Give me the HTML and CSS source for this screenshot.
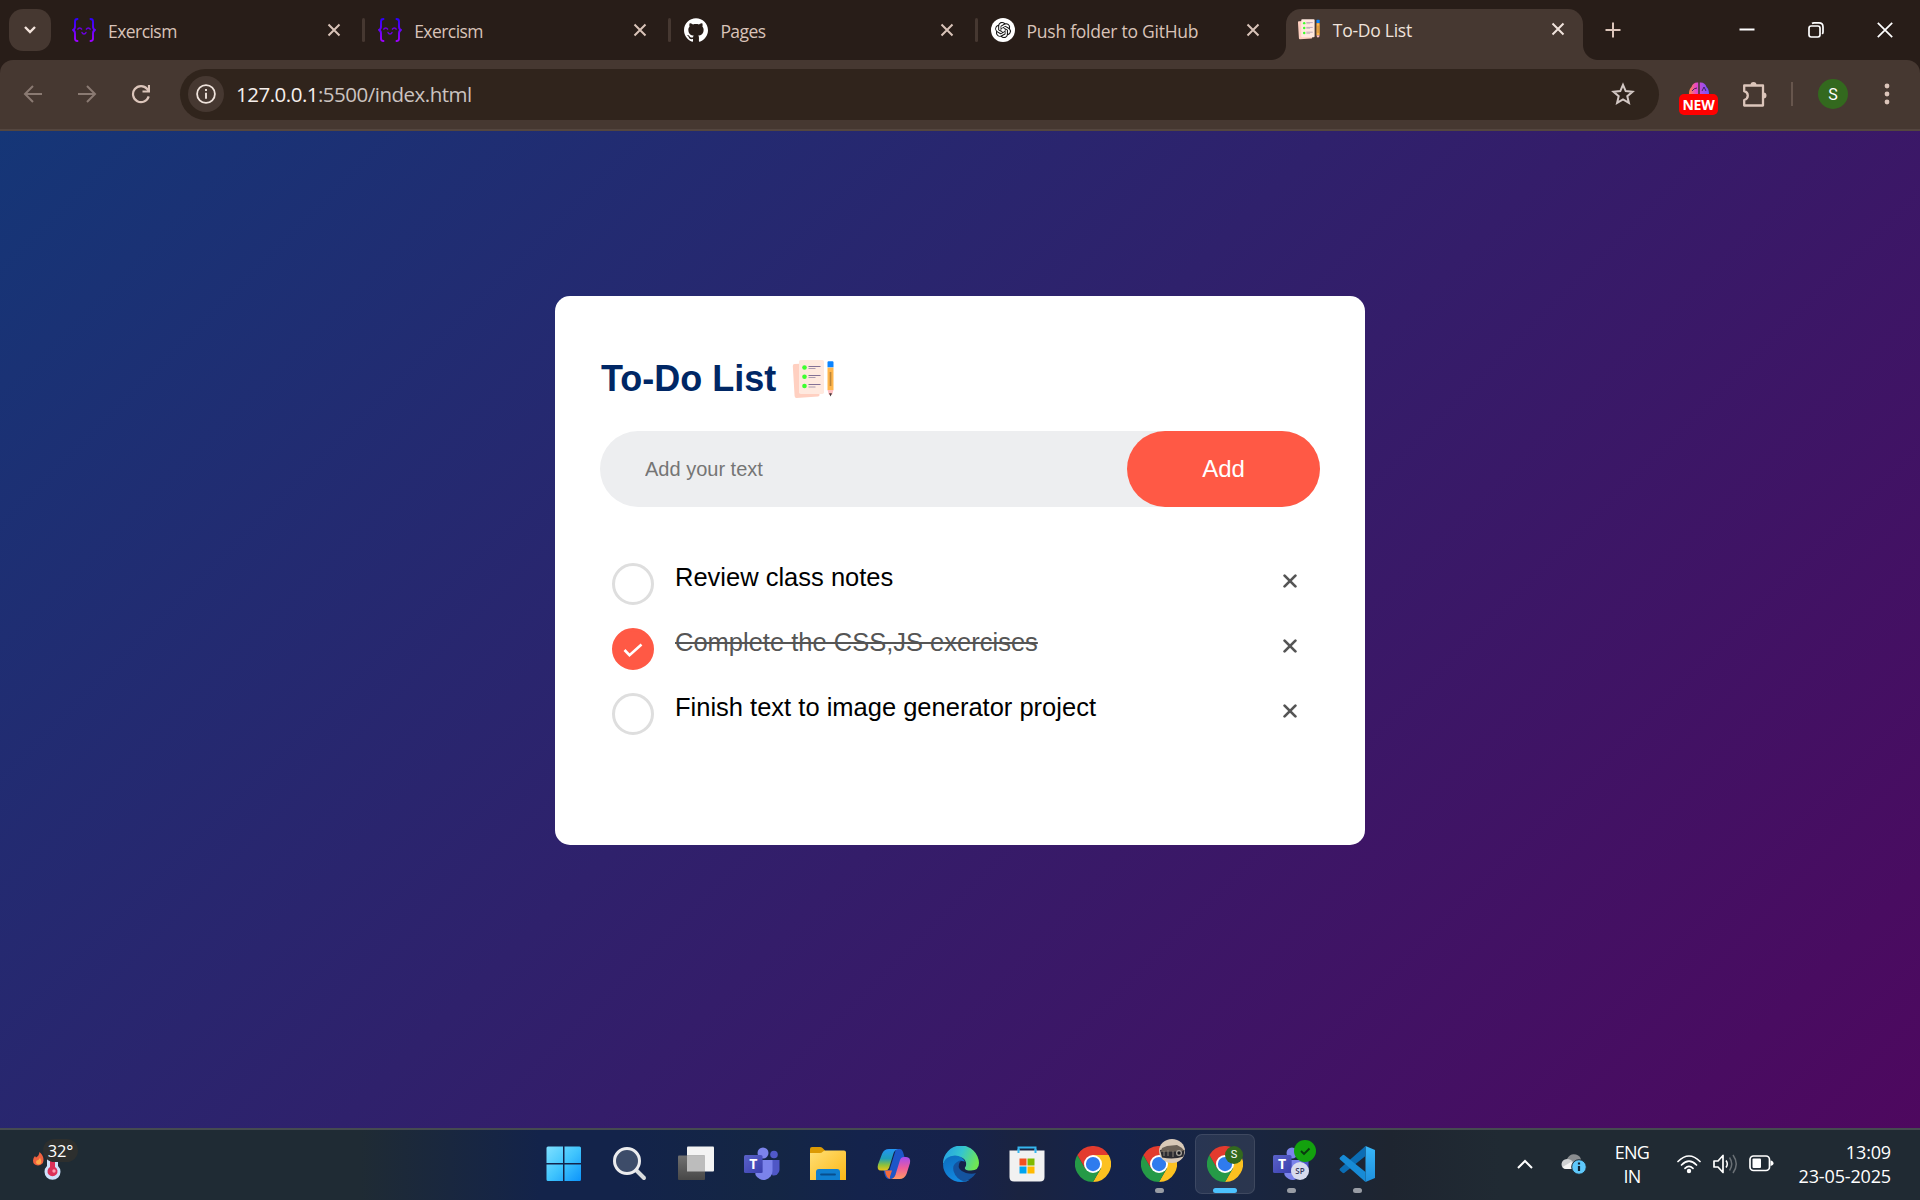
FILE: index.html
```html
<!DOCTYPE html>
<html lang="en">
<head>
<meta charset="utf-8">
<title>To-Do List</title>
<link rel="stylesheet" href="styles.css">
</head>
<body>
<svg class="defs" aria-hidden="true">
  <defs>
    <linearGradient id="exg" x1="0" y1="0" x2="0" y2="1"><stop offset="0" stop-color="#2e00ff"/><stop offset="1" stop-color="#9e00ff"/></linearGradient>
    <linearGradient id="win" x1="0" y1="0" x2="1" y2="1"><stop offset="0" stop-color="#7fe0ff"/><stop offset=".5" stop-color="#41c5fd"/><stop offset="1" stop-color="#0c94fb"/></linearGradient>
    <linearGradient id="gray" x1="0" y1="0" x2="0" y2="1"><stop offset="0" stop-color="#707070"/><stop offset="1" stop-color="#474747"/></linearGradient>
    <linearGradient id="fold" x1="0" y1="0" x2="1" y2="1"><stop offset="0" stop-color="#ffdf75"/><stop offset="1" stop-color="#fcb715"/></linearGradient>
    <linearGradient id="cop1" x1="0" y1="0" x2="0" y2="1"><stop offset="0" stop-color="#2395f5"/><stop offset=".45" stop-color="#20a0b8"/><stop offset=".75" stop-color="#8fc13a"/><stop offset="1" stop-color="#ecc419"/></linearGradient>
    <linearGradient id="cop2" x1="0" y1="0" x2="0" y2="1"><stop offset="0" stop-color="#a54cf0"/><stop offset=".5" stop-color="#ee5d9c"/><stop offset="1" stop-color="#ff9a63"/></linearGradient>
    <linearGradient id="edge1" x1="0" y1=".2" x2="1" y2=".5"><stop offset="0" stop-color="#259fe4"/><stop offset=".5" stop-color="#35c5cf"/><stop offset="1" stop-color="#6fe653"/></linearGradient>
    <linearGradient id="edge2" x1="0" y1="0" x2=".4" y2="1"><stop offset="0" stop-color="#0c6cbd"/><stop offset="1" stop-color="#1389e0"/></linearGradient>
    <linearGradient id="vsc" x1="0" y1="0" x2="0" y2="1"><stop offset="0" stop-color="#38b6f8"/><stop offset="1" stop-color="#1e90dd"/></linearGradient>
    <linearGradient id="brain" x1="0" y1="0" x2="1" y2="0"><stop offset="0" stop-color="#ff8a3d"/><stop offset=".35" stop-color="#e845c8"/><stop offset="1" stop-color="#6a55ff"/></linearGradient>
    <linearGradient id="teamsq" x1="0" y1="0" x2="1" y2="1"><stop offset="0" stop-color="#5a62c8"/><stop offset="1" stop-color="#3a3fae"/></linearGradient>
  </defs>
  <symbol id="exercism" viewBox="0 0 24 24">
    <g fill="none" stroke="url(#exg)" stroke-width="1.9" stroke-linecap="round" stroke-linejoin="round">
      <path d="M5.5 1C3.600 1 3 1.800 3 3.500v5C3 10.500 2.400 11.500 1 12c1.400.5 2 1.500 2 3.500v5c0 1.700.6 2.500 2.500 2.500"/>
      <path d="M18.500 1C20.400 1 21 1.800 21 3.500v5c0 2 .6 3 2 3.500-1.400.5-2 1.500-2 3.500v5c0 1.700-.6 2.500-2.500 2.500"/>
    </g>
    <g fill="none" stroke="#6a00dc" stroke-width="1.500" stroke-linecap="round"><path d="M5.800 11.200c.8-1.600 3-1.600 3.800 0M14.400 11.200c.8-1.600 3-1.600 3.800 0M10 14.500c.8 2 3.200 2 4 0"/></g>
  </symbol>
  <symbol id="notes" viewBox="0 0 45 45">
    <path d="M3.500 8q-1.800 0-1.700 2l1.800 30q.2 2 2 1.900L27 40.500q1.500-.2 1.500-1.500L26 7z" fill="#ffd0c1"/>
    <rect x="8" y="4" width="25" height="34" rx="1.800" fill="#ffe9df"/>
    <g fill="#3dff2e"><circle cx="13.500" cy="11.500" r="2.300"/><circle cx="13.500" cy="20.700" r="2.300"/><circle cx="13.500" cy="30" r="2.300"/></g>
    <path d="M17.500 10.500h12M17.500 19.500h12M17.500 28.500h12" stroke="#837095" stroke-width="1"/>
    <path d="M17.500 12.500h7M17.500 21.500h7M17.500 31h7" stroke="#ab9bb0" stroke-width="1"/>
    <path d="M36.500 11.500h6V34h-6z" fill="#ffb64d"/><path d="M39.500 16v14" stroke="#bd8638" stroke-width="1.700"/>
    <path d="M36.500 6.500q0-1.300 1-1.300h4q1 0 1 1.300v4.800h-6z" fill="#0a84ff"/>
    <path d="M36.500 34h6L41 39h-3z" fill="#ffbfc0"/><path d="M38 37.300h3l-1.500 3.200z" fill="#46383b"/>
  </symbol>
  <symbol id="x" viewBox="0 0 14 14"><path d="M1.500 1.500l11 11M12.500 1.500l-11 11" fill="none" stroke="currentColor" stroke-width="2"/></symbol>
  <symbol id="del" viewBox="0 0 14 14"><path d="M1.600 1.600l10.800 10.800M12.400 1.600L1.600 12.400" fill="none" stroke="currentColor" stroke-width="2.700" stroke-linecap="round"/></symbol>
  <symbol id="chrome" viewBox="0 0 48 48">
    <path d="M24 24L3.200 12A24 24 0 0 1 44.800 12z" fill="#e33b2e"/>
    <path d="M24 12h20.800A24 24 0 0 1 24 48L34.400 30z" fill="#fcc120"/>
    <path d="M3.200 12A24 24 0 0 0 24 48l10.400-18L24 24l-10.400 6z" fill="#259a47"/>
    <path d="M3.200 12h20.800v12l-10.400 6z" fill="#e33b2e"/>
    <circle cx="24" cy="24" r="12" fill="#fff"/><circle cx="24" cy="24" r="9.500" fill="#2f7bee"/>
  </symbol>
  <symbol id="teams" viewBox="0 0 36 36">
    <circle cx="30" cy="8.500" r="3.800" fill="#5059c9"/><path d="M23 14h12.500v10a6 6 0 0 1-7 5.500z" fill="#4f57c6"/>
    <circle cx="19" cy="7" r="5.500" fill="#7b83eb"/><path d="M10 14h18.500v11a9 9 0 0 1-17 4z" fill="#7b83eb"/>
    <path d="M10 14h8.500v13H10z" fill="#5c62c6"/>
    <rect x="0" y="9" width="18.500" height="18" rx="1.500" fill="url(#teamsq)"/>
  </symbol>
</svg>

<header class="browser">
  <div class="tabstrip">
    <button class="tab-search"><svg width="14" height="10" viewBox="0 0 14 10"><path d="M2 2l5 5 5-5" fill="none" stroke="#f3e4dc" stroke-width="2.400"/></svg></button>
    <div class="tab"><svg class="fav"><use href="#exercism"/></svg><span class="label tight">Exercism</span><svg class="close"><use href="#x"/></svg></div>
    <div class="tab sep"><svg class="fav"><use href="#exercism"/></svg><span class="label tight">Exercism</span><svg class="close"><use href="#x"/></svg></div>
    <div class="tab sep"><svg class="fav" viewBox="0 0 24 24"><path fill="#fff" d="M12 .297c-6.630 0-12 5.373-12 12 0 5.303 3.438 9.800 8.205 11.385.6.113.82-.258.82-.577 0-.285-.01-1.040-.015-2.040-3.338.724-4.042-1.610-4.042-1.610C4.422 18.070 3.633 17.700 3.633 17.700c-1.087-.744.084-.729.084-.729 1.205.084 1.838 1.236 1.838 1.236 1.070 1.835 2.809 1.305 3.495.998.108-.776.417-1.305.760-1.605-2.665-.3-5.466-1.332-5.466-5.930 0-1.310.465-2.380 1.235-3.220-.135-.303-.540-1.523.105-3.176 0 0 1.005-.322 3.300 1.230.960-.267 1.980-.399 3-.405 1.020.006 2.040.138 3 .405 2.280-1.552 3.285-1.230 3.285-1.230.645 1.653.240 2.873.120 3.176.765.840 1.230 1.910 1.230 3.220 0 4.610-2.805 5.625-5.475 5.920.420.360.810 1.096.810 2.220 0 1.606-.015 2.896-.015 3.286 0 .315.210.690.825.570C20.565 22.092 24 17.592 24 12.297c0-6.627-5.373-12-12-12"/></svg><span class="label tight">Pages</span><svg class="close"><use href="#x"/></svg></div>
    <div class="tab sep"><svg class="fav" viewBox="0 0 24 24"><circle cx="12" cy="12" r="12" fill="#fff"/><path transform="translate(4 4) scale(.67)" fill="#111" d="M22.2819 9.8211a5.9847 5.9847 0 0 0-.5157-4.9108 6.0462 6.0462 0 0 0-6.5098-2.9A6.0651 6.0651 0 0 0 4.9807 4.1818a5.9847 5.9847 0 0 0-3.9977 2.9 6.0462 6.0462 0 0 0 .7427 7.0966 5.98 5.98 0 0 0 .511 4.9107 6.051 6.051 0 0 0 6.5146 2.9001A5.9847 5.9847 0 0 0 13.2599 24a6.0557 6.0557 0 0 0 5.7718-4.2058 5.9894 5.9894 0 0 0 3.9977-2.9001 6.0557 6.0557 0 0 0-.7475-7.0729zm-9.022 12.6081a4.4755 4.4755 0 0 1-2.8764-1.0408l.1419-.0804 4.7783-2.7582a.7948.7948 0 0 0 .3927-.6813v-6.7369l2.02 1.1686a.071.071 0 0 1 .038.052v5.5826a4.504 4.504 0 0 1-4.4945 4.4944zm-9.6607-4.1254a4.4708 4.4708 0 0 1-.5346-3.0137l.142.0852 4.783 2.7582a.7712.7712 0 0 0 .7806 0l5.8428-3.3685v2.3324a.0804.0804 0 0 1-.0332.0615L9.74 19.9502a4.4992 4.4992 0 0 1-6.1408-1.6464zM2.3408 7.8956a4.485 4.485 0 0 1 2.3655-1.9728V11.6a.7664.7664 0 0 0 .3879.6765l5.8144 3.3543-2.0201 1.1685a.0757.0757 0 0 1-.071 0l-4.8303-2.7865A4.504 4.504 0 0 1 2.3408 7.872zm16.5963 3.8558L13.1038 8.364 15.1192 7.2a.0757.0757 0 0 1 .071 0l4.8303 2.7913a4.4944 4.4944 0 0 1-.6765 8.1042v-5.6772a.79.79 0 0 0-.407-.667zm2.0107-3.0231l-.142-.0852-4.7735-2.7818a.7759.7759 0 0 0-.7854 0L9.409 9.2297V6.8974a.0662.0662 0 0 1 .0284-.0615l4.8303-2.7866a4.4992 4.4992 0 0 1 6.6802 4.66zM8.3065 12.863l-2.02-1.1638a.0804.0804 0 0 1-.038-.0567V6.0742a4.4992 4.4992 0 0 1 7.3757-3.4537l-.142.0805L8.704 5.459a.7948.7948 0 0 0-.3927.6813zm1.0976-2.3654l2.602-1.4998 2.6069 1.4998v2.9994l-2.5974 1.4997-2.6067-1.4997Z"/></svg><span class="label">Push folder to GitHub</span><svg class="close"><use href="#x"/></svg></div>
    <div class="tab active"><svg class="fav"><use href="#notes"/></svg><span class="label">To-Do List</span><svg class="close"><use href="#x"/></svg></div>
    <svg class="plus" width="18" height="18" viewBox="0 0 18 18"><path d="M9 1.500v15M1.500 9h15" stroke="#dcc5ba" stroke-width="2"/></svg>
    <div class="winbtns">
      <svg width="16" height="16" viewBox="0 0 16 16"><path d="M.5 7.500h15" stroke="#fff" stroke-width="2"/></svg>
      <svg width="16" height="16" viewBox="0 0 16 16"><g fill="none" stroke="#fff" stroke-width="1.700"><rect x="1" y="4" width="11" height="11" rx="2.200"/><path d="M4 1.500q.8-.6 2-.6h5q4 0 4 4v5q0 1.200-.8 2"/></g></svg>
      <svg width="16" height="16" viewBox="0 0 16 16"><path d="M.8.8l14.400 14.400M15.200.8L.8 15.200" stroke="#fff" stroke-width="1.700"/></svg>
    </div>
  </div>
  <div class="toolbar">
    <div class="nav">
      <svg width="20" height="20" viewBox="0 0 20 20"><path d="M19 10H2.500M10 2l-8 8 8 8" fill="none" stroke="#8a7a72" stroke-width="2"/></svg>
      <svg width="20" height="20" viewBox="0 0 20 20"><path d="M1 10h16.500M10 2l8 8-8 8" fill="none" stroke="#8a7a72" stroke-width="2"/></svg>
      <svg width="20" height="20" viewBox="0 0 20 20"><path d="M17.700 12.400A8 8 0 1 1 16.200 5l1.500 2" fill="none" stroke="#dcc5ba" stroke-width="2.200"/><path d="M19 1v7.500h-7.500V6.400h5.400V1z" fill="#dcc5ba"/></svg>
    </div>
    <div class="omnibox">
      <span class="info"><svg width="20" height="20" viewBox="0 0 20 20"><circle cx="10" cy="10" r="8.900" fill="none" stroke="#efe3dc" stroke-width="1.800"/><path d="M10 8.800v6M10 5v2" stroke="#efe3dc" stroke-width="1.900"/></svg></span>
      <span class="url"><b>127.0.0.1</b>:5500/index.html</span>
      <svg class="star" width="24" height="24" viewBox="0 0 24 24"><path d="M12 2.800l2.700 6.300 6.800.6-5.200 4.500 1.600 6.700-5.900-3.600-5.900 3.600 1.600-6.700L2.500 9.700l6.800-.6z" fill="none" stroke="#d3c8c4" stroke-width="2"/></svg>
    </div>
    <div class="ext"><svg width="22" height="12" viewBox="0 0 22 12"><path d="M1 12Q1 7 3.500 5 5 0 10.200.5V12zM11.800 12V.5Q17 0 18.500 5 21 7 21 12z" fill="url(#brain)"/><path d="M4 9q2-3 5-3M14 9l2-4 2 4" fill="none" stroke="#40225e"/></svg><b>NEW</b></div>
    <svg class="puzzle" width="28" height="28" viewBox="0 0 28 28"><path d="M5 5.500h18v7.500v5v7.500H4.200V20q3.600-1 3.600-4.400T4.200 11.200V5.500z" fill="none" stroke="#dcc5ba" stroke-width="2.300" stroke-linejoin="round"/><path d="M10.500 5a3 3 0 0 1 6 0zM23.500 12.500a3 3 0 0 1 0 6z" fill="#dcc5ba"/></svg>
    <i class="rule"></i>
    <span class="avatar">S</span>
    <svg class="dots" width="6" height="24" viewBox="0 0 6 24"><g fill="#dcc5ba"><circle cx="3" cy="4" r="2.400"/><circle cx="3" cy="12" r="2.400"/><circle cx="3" cy="20" r="2.400"/></g></svg>
  </div>
</header>

<main class="page">
  <section class="todo-app">
    <h2>To-Do List <svg class="notes-icon"><use href="#notes"/></svg></h2>
    <div class="row"><input type="text" placeholder="Add your text"><button>Add</button></div>
    <ul>
      <li>Review class notes<span><svg width="14" height="14"><use href="#del"/></svg></span></li>
      <li class="checked">Complete the CSS,JS exercises<span><svg width="14" height="14"><use href="#del"/></svg></span><svg class="tick" viewBox="0 0 20 16"><path d="M1.500 8l5 5.200L18.500 2.500" fill="none" stroke="#fff" stroke-width="2.600"/></svg></li>
      <li>Finish text to image generator project<span><svg width="14" height="14"><use href="#del"/></svg></span></li>
    </ul>
  </section>
</main>

<footer class="taskbar">
  <div class="weather">
    <svg width="30" height="40" viewBox="0 0 30 40"><path d="M6.500 10q4.500 4 4 8.500t-5.500 5Q0 23 0 18.500q.2-3 2-4.500l1 1.500Q6 14 6.500 10z" fill="#f0613f"/><path d="M7 15.500q3 7-1.500 7Q2 22 3.500 18.500q2.500 0 3.500-3z" fill="#ffa847"/><path d="M14 13h11v11a8 8 0 1 1-11 0z" fill="#cfe2fb"/><path d="M17 13h5v12a5 5 0 1 1-5 0z" fill="#dc3158"/><circle cx="21" cy="29" r="1.700" fill="#ff9bb0"/></svg>
    <span>32°</span>
  </div>
  <div class="apps">
    <div class="app"><svg viewBox="0 0 36 36"><path d="M.5 2q0-1.500 1.500-1.500h15V17H.5zM18.500.5h15Q35 .5 35 2v15H18.500zM.5 18.500H17V35H2Q.5 35 .5 33.500zM18.500 18.500H35v15q0 1.500-1.500 1.500h-15z" fill="url(#win)"/></svg></div>
    <div class="app"><svg viewBox="0 0 36 36"><path d="M24 24l8 8" stroke="#d9dcde" stroke-width="4" stroke-linecap="round"/><circle cx="15" cy="15" r="12.500" fill="#3d4c69" stroke="#ececee" stroke-width="3"/></svg></div>
    <div class="app"><svg viewBox="0 0 36 36"><rect x="9" y="0.500" width="27" height="25" rx="1" fill="#f3f3f3"/><rect x="0" y="9.500" width="27" height="24.500" rx="1" fill="url(#gray)"/><path d="M9 9.500h18v16H9z" fill="#bcbcbc"/></svg></div>
    <div class="app"><svg><use href="#teams"/></svg><span class="tee">T</span></div>
    <div class="app"><svg viewBox="0 0 36 36"><path d="M0 7V3q0-2 2-2h8q1.500 0 2.500 1l3 3v3z" fill="#dc9a04"/><path d="M0 7h10q1.500 0 3-1.500Q14 4.500 16 4.500h18q2 0 2 2V34H0z" fill="url(#fold)"/><path d="M6 34V26q0-3 3-3h18q3 0 3 3v8z" fill="#0f7fd0"/><path d="M11 28.500h14" stroke="#084e8c" stroke-width="1.800" stroke-linecap="round"/></svg></div>
    <div class="app"><svg viewBox="0 0 36 36"><path d="M20 3h4q2 0 3 3l1.500 5h4q-7 0-9 7l-3 9q-2 6-7 6-4 0-5-5l-1-4h6z" fill="#1d56c8"/><path d="M22 3q-4 1-5 6l-4 13q-1 2.500-4 2.500H5Q.5 24.500 2 18.500L6 8q2-5 7-5z" fill="url(#cop1)"/><path d="M15 33q4-1 5-6l4-13q1-3 4-3h2q5 0 4 6l-3.500 11q-2 5-7 5z" fill="url(#cop2)"/><path d="M9 24.500h7l-2 6q-.5 2.500 1 2.500-5 0-6-8.500z" fill="#f36b3e"/></svg></div>
    <div class="app"><svg viewBox="0 0 36 36"><path d="M0 18a18 18 0 0 1 36-1q0 7.500-8 7.500-7 0-6-3 1.500-1 1-5-1-6-11-6-8 1-12 7.500z" fill="url(#edge1)"/><path d="M0 18q2-8 12-8.500 7 0 10 6-6-2-9 3-4 8 6 14 5 3 8 1-3 2.500-9 2.500A18 18 0 0 1 0 18z" fill="url(#edge2)"/><path d="M14 16q-5 3-3.500 9Q13 33 21 35.500q8-2 12-8.500-4 1.500-10 0-9-3-7-9 .5-2.500 3-4-3 .5-5 2z" fill="#14539f"/></svg></div>
    <div class="app"><svg viewBox="0 0 36 36"><path d="M9.500 8V1.500h17V8" fill="none" stroke="#35b5ee" stroke-width="2"/><path d="M.5 4.500h35V31q0 4.500-4.500 4.500H5Q.5 35.500.5 31z" fill="#f1f1f1"/><path d="M9.500 7V3M26.500 7V3" stroke="#35b5ee" stroke-width="2"/><path d="M10.500 12.500h7v7h-7z" fill="#f25022"/><path d="M18.500 12.500h7v7h-7z" fill="#7fba00"/><path d="M10.500 20.500h7v7h-7z" fill="#00a4ef"/><path d="M18.500 20.500h7v7h-7z" fill="#ffb900"/></svg></div>
    <div class="app"><svg><use href="#chrome"/></svg></div>
    <div class="app running"><svg><use href="#chrome"/></svg><svg class="photo" viewBox="0 0 26 24"><ellipse cx="13" cy="12" rx="13" ry="12" fill="#d8c9b8"/><path d="M1 11q9-3 24.500 0l-1 6.500Q15 21 3 18.500z" fill="#2b2b31"/><path d="M3 9l5-2 10-1 5 3 2 3-8 .5L2 13z" fill="#6b6157"/><circle cx="20" cy="14" r="3" fill="#aaa59d"/><circle cx="20" cy="14" r="1.700" fill="#17181d"/><path d="M5 12v5M9 11v6M14 12v6" stroke="#8a8279"/></svg></div>
    <div class="app running current"><svg><use href="#chrome"/></svg><span class="badge s">S</span></div>
    <div class="app running"><svg><use href="#teams"/></svg><span class="tee">T</span><span class="badge sp">SP</span><svg class="ok" viewBox="0 0 22 22"><circle cx="11" cy="11" r="11" fill="#13a10e"/><path d="M7 11l3 3 5.500-5.500" fill="none" stroke="#0a3a10" stroke-width="1.900"/></svg></div>
    <div class="app running"><svg viewBox="0 0 36 36"><path d="M26.500 0L36 4v28l-9.500 4z" fill="url(#vsc)"/><path d="M26.500 0v10L5.500 26.800q-1 .8-2 0l-2.500-2.200q-1-1 0-2z" fill="#0b6db4"/><path d="M26.500 36V26L5.500 9.200q-1-.8-2 0L1 11.400q-1 1 0 2z" fill="#178bd6"/></svg></div>
  </div>
  <div class="tray">
    <svg class="caret" width="16" height="10" viewBox="0 0 16 10"><path d="M1 9l7-7 7 7" fill="none" stroke="#fff" stroke-width="2"/></svg>
    <svg class="cloud" width="26" height="22" viewBox="0 0 26 22"><path d="M6 6q3-6 9-4.500 5 1.500 5 6L9 12z" fill="#8a8d90"/><path d="M5 16q-4.500-.5-4.500-5Q1 6.500 6 6q4 0 6 3l5 7z" fill="#cfd1d3"/><path d="M1.500 14L10 9l8 7H5q-2.500 0-3.500-2z" fill="#f3f3f3"/><circle cx="18" cy="14" r="7.300" fill="#5ec8fb" stroke="#202b34"/><path d="M18 13v5M18 9.500v2" stroke="#102434" stroke-width="2.200"/></svg>
    <div class="lang">ENG<br>IN</div>
    <svg class="wifi" width="24" height="20" viewBox="0 0 24 20"><g fill="none" stroke="#fff" stroke-width="1.700" stroke-linecap="round"><path d="M1 7.500Q12-3.500 23 7.500M4.500 11Q12 3.500 19.500 11M8 14.300q4-3.800 8 0"/></g><circle cx="12" cy="17" r="2.200" fill="#fff"/></svg>
    <svg class="vol" width="25" height="20" viewBox="0 0 25 20"><path d="M1 7h4l5-5.500v17L5 13H1z" fill="none" stroke="#fff" stroke-width="1.700" stroke-linejoin="round"/><path d="M13 6.500q2.600 3.500 0 7" fill="none" stroke="#fff" stroke-width="1.500"/><path d="M16.500 3.500q4.500 6.500 0 13M20 1q6.500 9 0 18" fill="none" stroke="#6a7075" stroke-width="1.500"/></svg>
    <svg class="bat" width="25" height="17" viewBox="0 0 25 17"><rect x="1" y="1" width="19.500" height="14.500" rx="3.500" fill="none" stroke="#fff" stroke-width="1.700"/><rect x="3.500" y="3.500" width="8.500" height="9.500" rx="1" fill="#fff"/><path d="M21.500 5.500q3 .5 3 2.700t-3 2.700z" fill="#fff"/></svg>
    <div class="clock">13:09<br>23-05-2025</div>
  </div>
</footer>
</body>
</html>
```
FILE: styles.css
```css
*, *::before, *::after { box-sizing: border-box; margin: 0; padding: 0; }
body {
  width: 1920px; height: 1200px; overflow: hidden;
  display: flex; flex-direction: column;
  font-family: "Open Sans", "Noto Sans", sans-serif;
  background: #281d18;
}
svg { display: block; flex: none; }
.defs { position: absolute; width: 0; height: 0; }

/* Browser chrome */
.browser { height: 131px; flex: none; background: #281d18; }
.tabstrip { height: 60px; display: flex; align-items: center; padding-left: 9px; color: #d9c3b8; }
.tab-search {
  width: 42px; height: 42px; margin-right: 7px; border: 0; border-radius: 14px;
  background: #463831; display: grid; place-items: center;
}
.tab { position: relative; width: 306.2px; height: 49px; margin-top: 10px; padding: 0 17px 10px 14px; display: flex; align-items: center; }
.tab.sep::before { content: ""; position: absolute; left: -2px; top: 7px; width: 3px; height: 24px; border-radius: 2px; background: #463831; }
.fav { width: 24px; height: 24px; margin-right: 12px; }
.label { flex: 1; font-size: 17.500px; line-height: 24px; letter-spacing: -.25px; padding-top: 2px; white-space: nowrap; }
.label.tight { letter-spacing: -.55px; }
.close { width: 14px; height: 14px; margin-right: 6px; }
.tab.active { width: 297px; height: 51px; margin: 9px 0 0 3px; padding: 0 12px 11px 11px; background: #463831; border-radius: 15px 15px 0 0; color: #f0e3dc; }
.tab.active::before, .tab.active::after {
  content: ""; position: absolute; bottom: 0; width: 15px; height: 15px;
}
.tab.active::before { left: -15px; background: radial-gradient(circle at 0 0, #281d18 14.5px, #463831 15.500px); }
.tab.active::after { right: -15px; background: radial-gradient(circle at 100% 0, #281d18 14.500px, #463831 15.500px); }
.plus { margin-left: 21px; }
.winbtns { margin-left: auto; padding-right: 27px; display: flex; gap: 53px; }
.toolbar {
  height: 71px; background: #463831; border-radius: 13px 13px 0 0; border-bottom: 2px solid #54463f;
  display: flex; align-items: center; padding: 0 30px 1px 23px;
}
.nav { display: flex; gap: 34px; width: 157px; }
.omnibox { width: 1479px; height: 51px; border-radius: 26px; background: #30241c; display: flex; align-items: center; padding: 0 24px 0 8px; }
.info { width: 36px; height: 36px; border-radius: 50%; background: #463831; display: grid; place-items: center; }
.url { flex: 1; margin-left: 12px; font-size: 20.500px; letter-spacing: -.5px; color: #cbc3c0; }
.url b { font-weight: 400; color: #f6efec; }
.ext { width: 39px; margin: 8px 0 0 20px; display: flex; flex-direction: column; align-items: center; }
.ext b { width: 39px; height: 21px; border-radius: 5px; background: #f00; color: #fff; font-size: 14px; line-height: 22px; letter-spacing: -.2px; text-align: center; }
.puzzle { margin-left: 22px; }
.rule { width: 2px; height: 24px; margin-left: 23px; background: #67564d; }
.avatar { width: 30px; height: 30px; margin-left: 25px; border-radius: 50%; background: #33691e; color: #fff; font: 16px/31px Roboto, sans-serif; text-align: center; }
.dots { margin-left: 36px; }

/* Page */
.page { flex: 1; padding: 15px; background: linear-gradient(135deg, #153677, #4e085f); font-family: "Liberation Sans", Arial, sans-serif; }
.todo-app { width: 810px; height: 549px; margin: 150px auto 0; padding: 60px 45px 105px; background: #fff; border-radius: 15px; }
h2 { display: flex; align-items: center; color: #002765; font-size: 36px; line-height: 41px; margin-bottom: 30px; padding-left: 1px; }
.notes-icon { width: 45px; height: 45px; margin-left: 15px; }
.row { display: flex; height: 76px; border-radius: 45px; background: #edeef0; padding-left: 30px; margin-bottom: 37.500px; }
.row input { flex: 1; min-width: 0; border: 0; outline: 0; background: transparent; padding: 0 15px; font: 20px "Liberation Sans", Arial, sans-serif; }
.row input::placeholder { color: #757575; }
.row button { width: 193px; border: 0; border-radius: 38px; background: #ff5945; color: #fff; font: 24px "Liberation Sans", Arial, sans-serif; }
ul { list-style: none; }
li { position: relative; height: 65px; padding: 18px 12px 18px 75px; font-size: 25.500px; line-height: 29px; }
li::before { content: ""; position: absolute; left: 12px; top: 18px; width: 42px; height: 42px; border: 3px solid #dedede; border-radius: 50%; }
li.checked { color: #555; text-decoration: line-through; }
li.checked::before { background: #ff5945; border-color: #ff5945; }
li span { position: absolute; right: 0; top: 6px; width: 60px; height: 60px; display: grid; place-items: center; color: #555; }
.tick { position: absolute; left: 23px; top: 32px; width: 20px; height: 16px; }

/* Taskbar */
.taskbar {
  flex: none; height: 72px; border-top: 2px solid #454b50; color: #fff; display: flex; align-items: stretch;
  background: linear-gradient(90deg, #1f2b34 0, #1f2b34 360px, #13234a 540px, #13234a 620px, #142644 770px, #14234c 860px, #16224b 960px, #1a2340 1020px, #14234b 1120px, #182542 1230px, #1e2530 1390px, #202a33 1500px, #202a33 100%);
}
.weather { position: relative; width: 531px; padding: 12px 0 0 33px; }
.weather span { position: absolute; left: 43px; top: 9px; width: 35px; height: 23px; border-radius: 12px; background: #2d2f2e; font-size: 16.500px; line-height: 23px; letter-spacing: -.2px; text-align: center; }
.apps { display: flex; }
.app { position: relative; width: 66.100px; padding: 16px 0 0 15px; }
.app > svg { width: 36px; height: 36px; }
.app.running::after { content: ""; position: absolute; left: 29px; bottom: 7px; width: 9px; height: 5px; border-radius: 3px; background: #989ca4; }
.app.current { z-index: 0; }
.app.current::before { content: ""; position: absolute; z-index: -1; left: 3px; top: 4px; width: 60px; height: 60px; border: 1px solid #ffffff18; border-radius: 7px; background: #ffffff14; }
.app.current::after { left: 21px; width: 24px; background: #4cc2ff; }
.tee { position: absolute; left: 15px; top: 25px; width: 18px; font-size: 14px; line-height: 18px; font-weight: 700; text-align: center; }
.badge { position: absolute; border-radius: 50%; text-align: center; }
.badge.s { left: 33px; top: 16px; width: 18px; height: 18px; background: #33691e; font: 11px/18px Roboto, sans-serif; }
.badge.sp { left: 33px; top: 32px; width: 18px; height: 18px; background: #d8dbed; color: #38395c; font-size: 8px; line-height: 18px; font-weight: 600; }
.app > .photo { position: absolute; left: 33px; top: 9px; width: 26px; height: 24px; }
.app > .ok { position: absolute; left: 36px; top: 10px; width: 22px; height: 22px; }
.tray { margin-left: auto; display: flex; align-items: center; padding: 0 29px 3px 0; font-size: 18px; line-height: 24px; }
.cloud { margin-left: 28px; }
.lang { width: 40px; margin-left: 25px; text-align: center; letter-spacing: -.7px; }
.wifi { margin-left: 25px; }
.vol { margin-left: 12px; }
.bat { margin-left: 11px; }
.clock { width: 100px; margin-left: 17px; text-align: right; letter-spacing: -.15px; white-space: nowrap; }
```
